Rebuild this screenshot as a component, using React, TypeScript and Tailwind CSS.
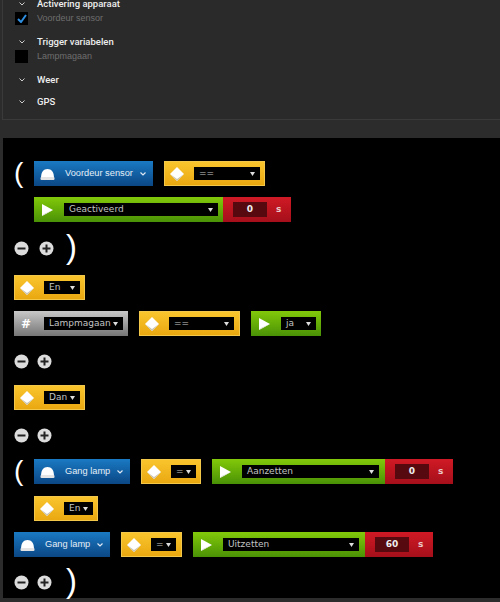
import type { ReactNode } from "react";

const Dome = () => (
  <svg width="15" height="12" viewBox="0 0 15 12" className="shrink-0">
    <path d="M1 10 C1 4 3.5 1 7.5 1 C11.5 1 14 4 14 10 Z" fill="#fff" />
    <rect x="0.5" y="9" width="14" height="3" rx="1" fill="#e4e4e4" />
  </svg>
);

const Diamond = () => (
  <svg width="14" height="14" viewBox="0 0 14 14">
    <path d="M7 0 L14 7 L7 14 L0 7 Z" fill="#fff" />
    <path d="M0 7 L7 14 L14 7 L7 12 Z" fill="#c9c4b4" />
  </svg>
);

const Play = () => (
  <svg width="13" height="14" viewBox="0 0 13 14">
    <path d="M1 1 L12 7 L1 13 Z" fill="#fff" />
    <path d="M1 13 L12 7 L3 11 Z" fill="#cfd6c4" />
  </svg>
);

const Caret = () => (
  <svg width="5" height="4" viewBox="0 0 5 4" className="shrink-0">
    <path d="M0 0 L5 0 L2.5 4 Z" fill="#ddd" />
  </svg>
);

const Round = ({ plus }: { plus?: boolean }) => (
  <svg width="15" height="15" viewBox="0 0 15 15" className="shrink-0">
    <circle cx="7.5" cy="7.5" r="7" fill="#dcdcdc" />
    <rect x="3.5" y="6.5" width="8" height="2" fill="#222" />
    {plus && <rect x="6.5" y="3.5" width="2" height="8" fill="#222" />}
  </svg>
);

const Select = ({ label, width }: { label: string; width: string }) => (
  <div className={`${width} h-[13px] bg-black flex items-center justify-between pl-[5px] pr-[5px]`}>
    <span className="text-[9px] leading-none text-[#c4c4c4] whitespace-nowrap">{label}</span>
    <Caret />
  </div>
);

const Yellow = ({ label, width, select }: { label: string; width: string; select: string }) => (
  <div className={`${width} h-[25px] shrink-0 flex items-center bg-gradient-to-b from-[#f9c52c] to-[#eaa80f] border border-[#f3c84a]`}>
    <div className="w-[29px] flex justify-center pr-[5px]">
      <Diamond />
    </div>
    <Select label={label} width={select} />
  </div>
);

const Green = ({ label, width, select }: { label: string; width: string; select: string }) => (
  <div className={`${width} h-[25px] shrink-0 flex items-center bg-gradient-to-b from-[#82c90a] to-[#4a9206]`}>
    <div className="w-[30px] flex justify-center pr-[3px]">
      <Play />
    </div>
    <Select label={label} width={select} />
  </div>
);

const Red = ({ value }: { value: string }) => (
  <div className="w-[68px] h-[25px] shrink-0 flex items-center bg-gradient-to-b from-[#d01a25] to-[#a50f1a] pl-[10px]">
    <div className="w-[34px] h-[15px] bg-[#560a10] flex items-center justify-center text-[9px] font-bold text-[#eee]">
      {value}
    </div>
    <span className="ml-[9px] text-[9px] font-bold text-[#e8c8c8]">s</span>
  </div>
);

const Blue = ({ label, width }: { label: string; width: string }) => (
  <div className={`${width} h-[25px] shrink-0 flex items-center bg-gradient-to-b from-[#1a7ac4] to-[#0b4785] pl-[6px] pr-[7px]`}>
    <Dome />
    <span className="ml-[10px] text-[9.25px] text-[#e6eef6] whitespace-nowrap font-['Liberation_Sans',sans-serif]">
      {label}
    </span>
    <svg width="6" height="4" viewBox="0 0 6 4" className="ml-auto shrink-0">
      <path d="M0.5 0.5 L3 3 L5.5 0.5" fill="none" stroke="#dfe8f2" strokeWidth="1.2" />
    </svg>
  </div>
);

const Open = () => (
  <div className="w-[20px] h-[25px] shrink-0 overflow-visible">
    <span className="block text-[28px] leading-[24px] text-white font-['Liberation_Sans',sans-serif]">(</span>
  </div>
);

const Close = () => (
  <span className="block h-[30px] text-[33px] leading-[28px] text-white font-['Liberation_Sans',sans-serif]">)</span>
);

const SideItem = ({ title, first }: { title: string; first?: boolean }) => (
  <div className={`flex items-center ${first ? "h-[7px]" : "h-[12px]"}`}>
    <svg width="6" height="4" viewBox="0 0 6 4" className="ml-[16px]">
      <path d="M0.5 0.5 L3 3 L5.5 0.5" fill="none" stroke="#ccc" strokeWidth="1" />
    </svg>
    <span className="ml-[12px] text-[9.5px] font-medium leading-none text-[#eee] font-['Roboto',sans-serif]">
      {title}
    </span>
  </div>
);

const Check = ({ label, checked, className }: { label: string; checked?: boolean; className: string }) => (
  <div className={`flex items-center ml-[12px] ${className}`}>
    <div className="w-[13px] h-[13px] bg-black flex items-center justify-center">
      {checked && (
        <svg width="10" height="9" viewBox="0 0 10 9">
          <path d="M1 5 L4 8 L9 1" fill="none" stroke="#2f8fe0" strokeWidth="2" />
        </svg>
      )}
    </div>
    <span className="ml-[9px] text-[9px] leading-none text-[#6e6e6e] font-['Liberation_Sans',sans-serif]">{label}</span>
  </div>
);

const Bar = ({ children, className }: { children: ReactNode; className: string }) => (
  <div className={`flex ${className}`}>{children}</div>
);

export default function App() {
  return (
    <div className="w-[500px] h-[602px] overflow-hidden bg-[#2c2c2c] pl-[2px] font-['DejaVu_Sans',sans-serif]">
      <div className="h-[120px] border-l border-b border-[#3a3a3a] bg-[#2a2a2a]">
        <SideItem title="Activering apparaat" first />
        <Check label="Voordeur sensor" checked className="mt-[5px]" />
        <div className="mt-[11px]">
          <SideItem title="Trigger variabelen" />
        </div>
        <Check label="Lampmagaan" className="mt-[2px]" />
        <div className="mt-[11px]">
          <SideItem title="Weer" />
        </div>
        <div className="mt-[10px]">
          <SideItem title="GPS" />
        </div>
      </div>

      <div className="mt-[18px] ml-[1px] h-[460px] bg-black pl-[11px] pt-[23px]">
        <Bar className="">
          <Open />
          <Blue label="Voordeur sensor" width="w-[119px]" />
          <div className="ml-[11px]">
            <Yellow label="==" width="w-[101px]" select="w-[66px]" />
          </div>
        </Bar>
        <Bar className="mt-[11px] pl-[20px]">
          <Green label="Geactiveerd" width="w-[189px]" select="w-[154px]" />
          <Red value="0" />
        </Bar>
        <Bar className="items-center mt-[11px]">
          <Round />
          <div className="ml-[10px]">
            <Round plus />
          </div>
          <div className="ml-[12px]">
            <Close />
          </div>
        </Bar>
        <div className="mt-[12px]">
          <Yellow label="En" width="w-[71px]" select="w-[36px]" />
        </div>
        <Bar className="mt-[11px]">
          <div className="w-[114px] h-[25px] flex items-center bg-gradient-to-b from-[#c8c8c8] to-[#767676]">
            <span className="w-[30px] pr-[6px] text-center text-[12px] font-bold text-white">#</span>
            <Select label="Lampmagaan" width="w-[79px]" />
          </div>
          <div className="ml-[11px]">
            <Yellow label="==" width="w-[101px]" select="w-[65px]" />
          </div>
          <div className="ml-[11px]">
            <Green label="ja" width="w-[70px]" select="w-[35px]" />
          </div>
        </Bar>
        <Bar className="mt-[18px]">
          <Round />
          <div className="ml-[8px]">
            <Round plus />
          </div>
        </Bar>
        <div className="mt-[16px]">
          <Yellow label="Dan" width="w-[71px]" select="w-[36px]" />
        </div>
        <Bar className="mt-[18px]">
          <Round />
          <div className="ml-[8px]">
            <Round plus />
          </div>
        </Bar>
        <Bar className="mt-[16px]">
          <Open />
          <Blue label="Gang lamp" width="w-[96px]" />
          <div className="ml-[11px]">
            <Yellow label="=" width="w-[60px]" select="w-[25px]" />
          </div>
          <div className="ml-[11px]">
            <Green label="Aanzetten" width="w-[173px]" select="w-[137px]" />
          </div>
          <Red value="0" />
        </Bar>
        <div className="mt-[12px] pl-[20px]">
          <Yellow label="En" width="w-[64px]" select="w-[29px]" />
        </div>
        <Bar className="mt-[11px]">
          <Blue label="Gang lamp" width="w-[96px]" />
          <div className="ml-[11px]">
            <Yellow label="=" width="w-[61px]" select="w-[25px]" />
          </div>
          <div className="ml-[11px]">
            <Green label="Uitzetten" width="w-[172px]" select="w-[136px]" />
          </div>
          <Red value="60" />
        </Bar>
        <Bar className="items-center mt-[10px]">
          <Round />
          <div className="ml-[8px]">
            <Round plus />
          </div>
          <div className="ml-[14px]">
            <Close />
          </div>
        </Bar>
      </div>
    </div>
  );
}
